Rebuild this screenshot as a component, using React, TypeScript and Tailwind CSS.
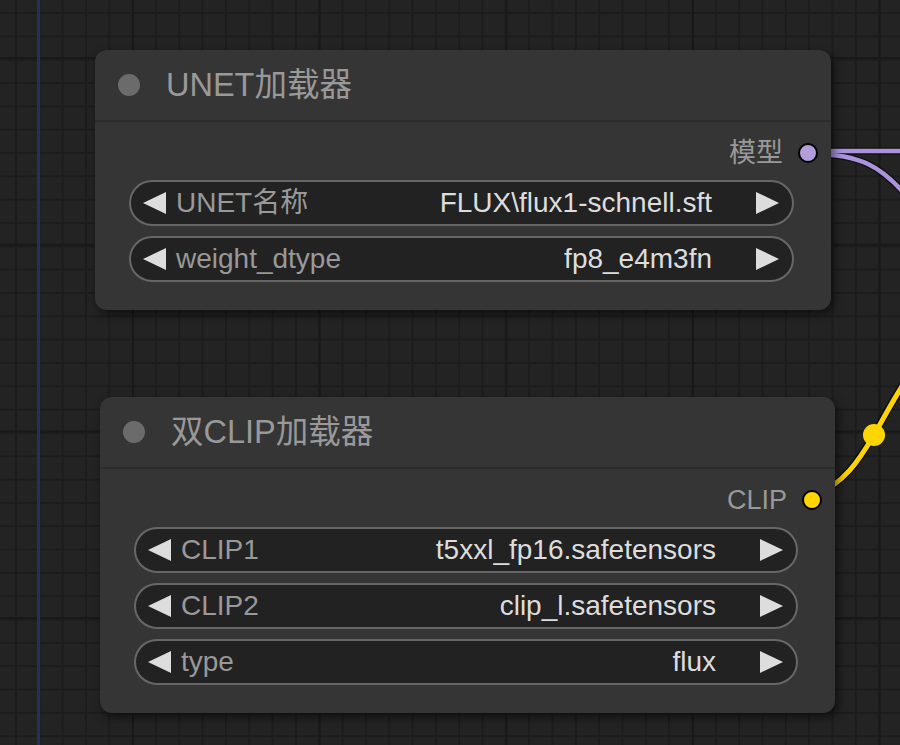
import React from "react";

const FONT = "font-['Liberation_Sans','Noto_Sans_CJK_SC',sans-serif]";

function Arrow({ dir }: { dir: "left" | "right" }) {
  return (
    <svg width="23" height="22" viewBox="0 0 23 22" className="shrink-0">
      <polygon
        points={dir === "left" ? "23,0 23,22 0,11" : "0,0 0,22 23,11"}
        fill="#dddddd"
      />
    </svg>
  );
}

function Combo({ label, value }: { label: string; value: string }) {
  return (
    <div className="flex h-[46px] items-center rounded-full border-2 border-[#676767] bg-[#222222] pl-[12px] pr-[13px] text-[28px] leading-none">
      <Arrow dir="left" />
      <span className="ml-[10px] text-[#999999]">{label}</span>
      <span className="ml-auto mr-[44px] text-[#dddddd]">{value}</span>
      <Arrow dir="right" />
    </div>
  );
}

function GraphNode({
  title,
  output,
  dot,
  widgets,
  className,
}: {
  title: string;
  output: string;
  dot: string;
  widgets: [string, string][];
  className: string;
}) {
  return (
    <div
      className={`absolute rounded-[12px] bg-[#353535] shadow-[3px_4px_10px_rgba(0,0,0,0.55)] ${className}`}
    >
      <div className="flex h-[72px] items-center border-b-2 border-[#2c2c2c] pl-[23px]">
        <span className="h-[22px] w-[22px] shrink-0 rounded-full bg-[#6b6b6b]" />
        <span className="ml-[26px] text-[32.5px] leading-none text-[#999999]">
          {title}
        </span>
      </div>

      <div className="pt-[8px] pb-[28px]">
        <div className="flex h-[46px] items-center justify-end pr-[13px]">
          <span className="text-[27px] leading-none text-[#999999]">{output}</span>
          <span className={`ml-[15px] h-[20px] w-[20px] rounded-full border-2 border-black ${dot}`} />
        </div>

        <div className="mt-[4px] flex flex-col gap-[10px] pl-[34px] pr-[37px]">
          {widgets.map(([l, v]) => (
            <Combo key={l} label={l} value={v} />
          ))}
        </div>
      </div>
    </div>
  );
}

function Wires() {
  return (
    <svg
      width="900"
      height="745"
      viewBox="0 0 900 745"
      className="pointer-events-none absolute left-0 top-0"
    >
      {/* model links */}
      <path d="M812 151 L905 151" stroke="#000" strokeOpacity="0.55" strokeWidth="7" fill="none" />
      <path d="M812 154 C860 154, 882 166, 910 200" stroke="#000" strokeOpacity="0.55" strokeWidth="7" fill="none" />
      <path d="M812 151 L905 151" stroke="#a993dc" strokeWidth="4.5" fill="none" />
      <path d="M812 154 C860 154, 882 166, 910 200" stroke="#a993dc" strokeWidth="4.5" fill="none" />

      {/* clip link */}
      <path
        d="M812 498 C845 482, 858 462, 874 435 C886 414, 893 400, 906 380"
        stroke="#000"
        strokeOpacity="0.55"
        strokeWidth="8"
        fill="none"
      />
      <path
        d="M812 498 C845 482, 858 462, 874 435 C886 414, 893 400, 906 380"
        stroke="#ffd500"
        strokeWidth="5"
        fill="none"
      />
      <circle cx="874" cy="435" r="11" fill="#ffd500" />
    </svg>
  );
}

export default function App() {
  return (
    <div
      className={`relative h-[745px] w-[900px] overflow-hidden bg-[#232323] bg-[linear-gradient(to_right,#191919_2px,transparent_2px),linear-gradient(to_bottom,#191919_2px,transparent_2px),linear-gradient(to_right,#1c1c1c_2px,transparent_2px),linear-gradient(to_bottom,#1c1c1c_2px,transparent_2px)] bg-[size:186.67px_186.67px,186.67px_186.67px,23.333px_23.333px,23.333px_23.333px] bg-[position:132px_57px,132px_57px,15px_12px,15px_12px] ${FONT}`}
    >
      <div className="absolute left-[37px] top-0 h-full w-[3px] bg-[#24315a]" />

      <Wires />

      <GraphNode
        className="left-[95px] top-[50px] w-[736px]"
        title="UNET加载器"
        output="模型"
        dot="bg-[#b39ddb]"
        widgets={[
          ["UNET名称", "FLUX\\flux1-schnell.sft"],
          ["weight_dtype", "fp8_e4m3fn"],
        ]}
      />

      <GraphNode
        className="left-[100px] top-[397px] w-[735px]"
        title="双CLIP加载器"
        output="CLIP"
        dot="bg-[#ffd500]"
        widgets={[
          ["CLIP1", "t5xxl_fp16.safetensors"],
          ["CLIP2", "clip_l.safetensors"],
          ["type", "flux"],
        ]}
      />
    </div>
  );
}
